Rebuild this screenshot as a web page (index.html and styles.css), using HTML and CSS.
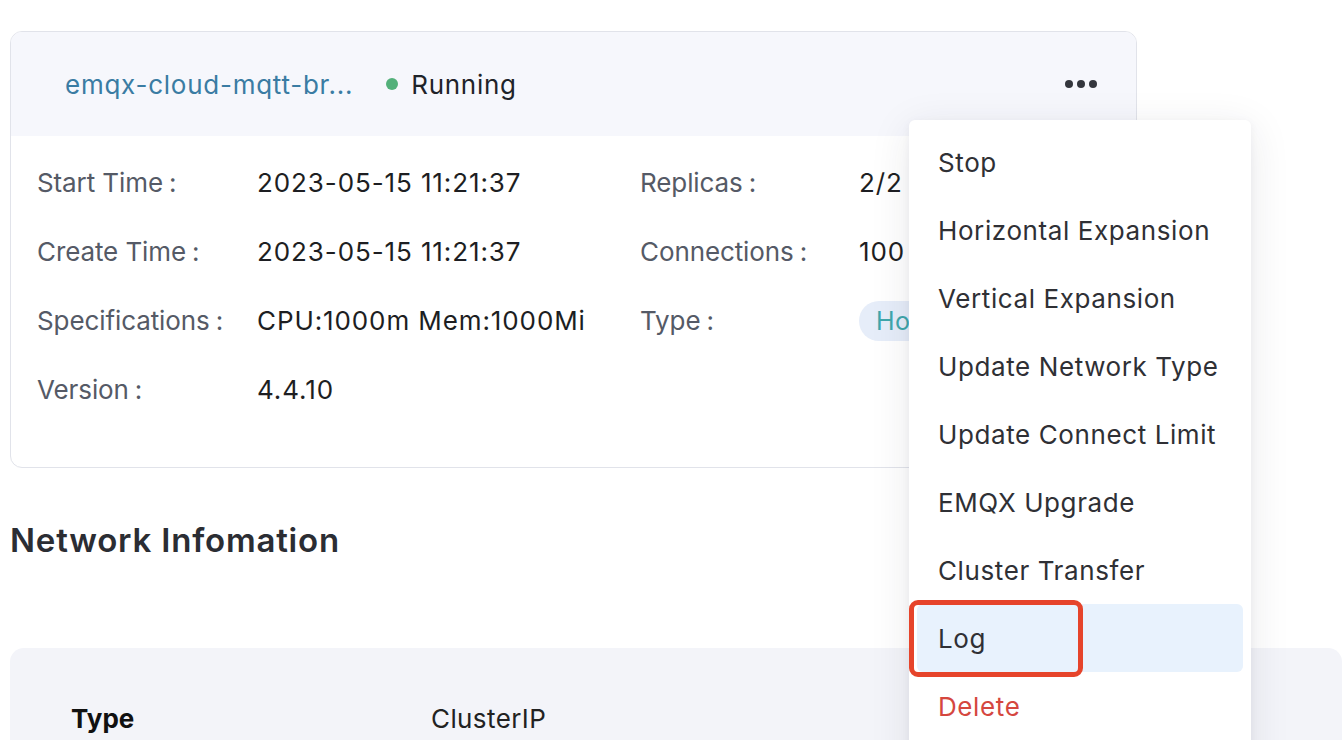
FILE: index.html
```html
<!DOCTYPE html>
<html>
<head>
<meta charset="utf-8">
<link rel="stylesheet" href="styles.css">
</head>
<body>
<div class="page">
  <div class="card">
    <div class="card-head">
      <div class="title-group">
        <span class="name">emqx-cloud-mqtt-br...</span>
        <span class="status"><span class="dot"></span>Running</span>
      </div>
      <div class="more"><span></span><span></span><span></span></div>
    </div>
    <div class="card-body">
      <div class="col">
        <div class="row"><span class="label">Start Time<i>:</i></span><span class="value">2023-05-15 11:21:37</span></div>
        <div class="row"><span class="label">Create Time<i>:</i></span><span class="value">2023-05-15 11:21:37</span></div>
        <div class="row"><span class="label">Specifications<i>:</i></span><span class="value">CPU:1000m Mem:1000Mi</span></div>
        <div class="row"><span class="label">Version<i>:</i></span><span class="value">4.4.10</span></div>
      </div>
      <div class="col col2">
        <div class="row"><span class="label">Replicas<i>:</i></span><span class="value">2/2</span></div>
        <div class="row"><span class="label">Connections<i>:</i></span><span class="value">100</span></div>
        <div class="row"><span class="label">Type<i>:</i></span><span class="value"><span class="tag">Hosted</span></span></div>
      </div>
    </div>
  </div>

  <h2 class="section-title">Network Infomation</h2>

  <div class="net-panel">
    <div class="net-row"><span class="net-key">Type</span><span class="net-val">ClusterIP</span></div>
  </div>

  <div class="menu">
    <div class="item">Stop</div>
    <div class="item">Horizontal Expansion</div>
    <div class="item">Vertical Expansion</div>
    <div class="item">Update Network Type</div>
    <div class="item">Update Connect Limit</div>
    <div class="item">EMQX Upgrade</div>
    <div class="item">Cluster Transfer</div>
    <div class="item active">Log<span class="mark"></span></div>
    <div class="item danger">Delete</div>
  </div>
</div>
</body>
</html>
```

FILE: styles.css
```css
html, body {
  margin: 0;
  padding: 0;
  background: #ffffff;
  font-family: Inter, "Noto Sans", "Liberation Sans", sans-serif;
  overflow: hidden;
}
.page {
  position: relative;
  width: 1342px;
  height: 740px;
  padding: 31px 0 0 10px;
  box-sizing: border-box;
  overflow: hidden;
}
.card {
  width: 1127px;
  height: 437px;
  box-sizing: border-box;
  border: 1px solid #e1e3ea;
  border-radius: 12px;
  overflow: hidden;
  background: #fff;
}
.card-head {
  height: 104px;
  background: #f6f7fc;
  display: flex;
  align-items: center;
  justify-content: space-between;
  padding: 0 39px 0 54px;
  box-sizing: border-box;
}
.title-group {
  display: flex;
  align-items: center;
  gap: 33px;
}
.name {
  font-size: 26px;
  color: #3a7ca3;
  letter-spacing: 0.75px;
}
.status {
  display: flex;
  align-items: center;
  font-size: 26px;
  color: #1f2329;
  letter-spacing: 0.7px;
}
.dot {
  width: 12px;
  height: 12px;
  border-radius: 50%;
  background: #53b07a;
  margin-right: 13px;
}
.more {
  display: flex;
  gap: 4px;
  margin-top: -1px;
}
.more span {
  width: 8px;
  height: 8px;
  border-radius: 50%;
  background: #34363d;
}
.card-body {
  display: flex;
  padding: 12px 0 0 26px;
}
.col {
  width: 603px;
}
.col2 {
  width: 480px;
}
.row {
  height: 69px;
  display: flex;
  align-items: center;
  font-size: 26px;
}
.label {
  width: 220px;
  flex: none;
  color: #555a66;
  letter-spacing: -0.1px;
}
.col2 .label {
  width: 219px;
}
.label i {
  font-style: normal;
  margin-left: 6px;
}
.value {
  color: #1d1e22;
  letter-spacing: 0.9px;
  white-space: nowrap;
}
.tag {
  display: inline-flex;
  align-items: center;
  height: 40px;
  padding: 0 17px;
  border-radius: 20px;
  background: #e6edf9;
  color: #3fa6ac;
  font-size: 25px;
  letter-spacing: 0.5px;
}
.section-title {
  margin: 51px 0 0 0;
  height: 42px;
  line-height: 42px;
  font-size: 33px;
  font-weight: 600;
  color: #2b2d33;
  letter-spacing: 0.8px;
}
.net-panel {
  margin-top: 87px;
  width: 1332px;
  height: 200px;
  background: #f3f4f9;
  border-radius: 14px;
  padding: 55px 0 0 61px;
  box-sizing: border-box;
}
.net-row {
  display: flex;
  font-size: 26px;
}
.net-key {
  width: 360px;
  font-weight: 700;
  color: #111;
}
.net-val {
  color: #222;
  letter-spacing: 0.4px;
}
.menu {
  position: absolute;
  left: 909px;
  top: 120px;
  width: 342px;
  height: 660px;
  background: #fff;
  border-radius: 6px;
  box-shadow: 0 8px 40px rgba(40, 44, 60, 0.10), 0 2px 8px rgba(40, 44, 60, 0.05);
  padding-top: 8px;
  box-sizing: border-box;
}
.item {
  position: relative;
  height: 68px;
  margin: 0 8px;
  padding-left: 21px;
  display: flex;
  align-items: center;
  font-size: 26px;
  color: #2f3035;
  border-radius: 6px;
  letter-spacing: 0.6px;
}
.item.active {
  background: #e8f2fd;
}
.item.danger {
  color: #d5473f;
}
.mark {
  position: absolute;
  left: -8px;
  top: -4px;
  width: 174px;
  height: 77px;
  box-sizing: border-box;
  border: 5px solid #e6442b;
  border-radius: 9px;
}
```
